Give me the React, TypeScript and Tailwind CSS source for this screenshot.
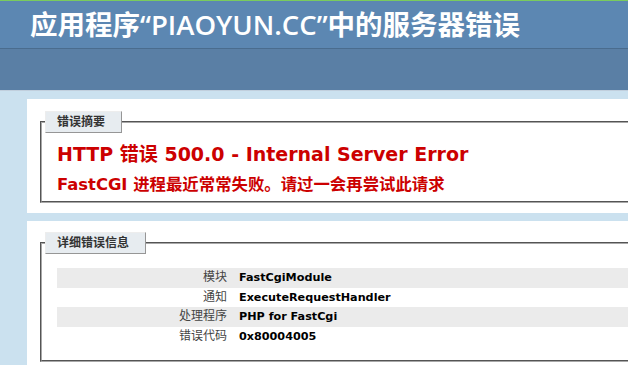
const details = [
  { label: "模块", value: "FastCgiModule", alt: true },
  { label: "通知", value: "ExecuteRequestHandler", alt: false },
  { label: "处理程序", value: "PHP for FastCgi", alt: true },
  { label: "错误代码", value: "0x80004005", alt: false },
];

const Legend = ({ children }: { children: React.ReactNode }) => (
  <div className="-ml-[12px] -mt-[12px] w-fit border-t border-l border-r border-b border-t-[#EDEDED] border-l-[#EDEDED] border-r-[#969696] border-b-[#969696] bg-[#E7ECF0] py-[4px] pl-[11px] pr-[16px] text-[12px] font-bold leading-[12px] text-[#333333]">
    {children}
  </div>
);

const App = () => (
  <div className="min-h-screen w-full overflow-hidden bg-[#CBE1EF] font-['DejaVu_Sans','Noto_Sans_CJK_SC',sans-serif] text-[11.2px]">
    {/* Header */}
    <div className="h-px bg-[#7acb5e]" />
    <div className="flex h-[47px] items-center bg-[#5C87B2] pl-[30px]">
      <h1 className="font-['Open_Sans','Noto_Sans_CJK_SC',sans-serif] text-[27.5px] font-semibold leading-[34px] text-white">
        应用程序“PIAOYUN.CC”中的服务器错误
      </h1>
    </div>
    <div className="h-[43px] border-t border-b border-t-[#4A6C8E] border-b-[#C1CFDD] bg-[#5A7FA5]" />

    <div className="pl-[27px] pt-[8px]">
      {/* Summary */}
      <div className="w-[700px] bg-white px-[10px] pt-[22px] pb-[10px]">
        <div className="ml-[3px] border-2 border-[#a8a8a8] px-[15px] pb-[7px] [border-style:groove]">
          <Legend>错误摘要</Legend>
          <h2 className="mt-[10px] text-[19px] font-bold leading-[22px] text-[#CC0000]">
            HTTP 错误 500.0 - Internal Server Error
          </h2>
          <h3 className="mt-[10px] text-[16.4px] font-bold leading-[19px] text-[#CC0000]">
            FastCGI 进程最近常常失败。请过一会再尝试此请求
          </h3>
        </div>
      </div>

      {/* Detailed error info */}
      <div className="mt-[8px] w-[700px] bg-white px-[10px] pt-[21px] pb-[10px]">
        <div className="ml-[3px] border-2 border-[#a8a8a8] px-[15px] pb-[14px] [border-style:groove]">
          <Legend>详细错误信息</Legend>
          <div className="mt-[14px] flex flex-col">
            {details.map((row) => (
              <div key={row.label} className={`flex py-[3px] leading-[13.5px] ${row.alt ? "bg-[#ebebeb]" : ""}`}>
                <div className="w-[182px] pr-[12px] text-right text-[12px] text-[#444444]">{row.label}</div>
                <div className="font-bold text-black">{row.value}</div>
              </div>
            ))}
          </div>
        </div>
      </div>
    </div>
  </div>
);

export default App;
